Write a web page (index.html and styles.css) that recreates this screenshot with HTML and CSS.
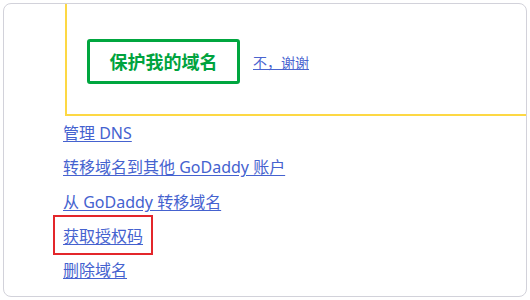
FILE: index.html
```html
<!DOCTYPE html>
<html lang="zh-CN">
<head>
<meta charset="utf-8">
<link rel="stylesheet" href="styles.css">
</head>
<body>
<div class="card">
  <div class="promo">
    <div class="promo-actions">
      <a class="btn-protect" href="#">保护我的域名</a>
      <a class="decline" href="#">不，谢谢</a>
    </div>
  </div>
  <ul class="actions">
    <li><a href="#">管理 DNS</a></li>
    <li><a href="#">转移域名到其他 GoDaddy 账户</a></li>
    <li><a href="#">从 GoDaddy 转移域名</a></li>
    <li><a class="highlight" href="#">获取授权码</a></li>
    <li><a href="#">删除域名</a></li>
  </ul>
</div>
</body>
</html>
```
FILE: styles.css
```css
html, body {
  margin: 0;
  padding: 0;
  background: #ffffff;
}

body {
  font-family: "Noto Sans", "Noto Sans CJK SC", sans-serif;
}

.card {
  margin: 3px;
  width: 524px;
  height: 294px;
  box-sizing: border-box;
  border: 1px solid #d2d2da;
  border-radius: 8px;
  overflow: hidden;
  background: #ffffff;
}

.promo {
  margin: -7px -2px 0 61px;
  border: 2px solid #fdd844;
  padding: 40px 0 30px 20px;
}

.promo-actions {
  display: flex;
  align-items: center;
}

.btn-protect {
  display: block;
  width: 147px;
  height: 39px;
  border: 3px solid #00a63f;
  border-radius: 3px;
  color: #00a33e;
  font-family: "Noto Sans CJK SC", sans-serif;
  font-size: 18px;
  font-weight: 700;
  line-height: 39px;
  text-align: center;
  text-decoration: none;
}

.decline {
  margin-left: 13px;
  color: #4a64cf;
  font-family: "Noto Sans CJK SC", sans-serif;
  font-size: 14px;
  text-decoration: underline;
}

.actions {
  list-style: none;
  margin: 0;
  padding: 0 0 0 59px;
}

.actions li {
  display: flex;
  height: 34.3px;
  align-items: center;
}

.actions a {
  position: relative;
  display: inline-block;
  color: #4562cf;
  font-size: 16px;
  line-height: 34px;
  text-decoration: underline;
  text-underline-offset: 2px;
}

.actions a.highlight::after {
  content: "";
  position: absolute;
  top: -4px;
  bottom: -2px;
  left: -10px;
  right: -10px;
  border: 2px solid #e3262b;
}
```
